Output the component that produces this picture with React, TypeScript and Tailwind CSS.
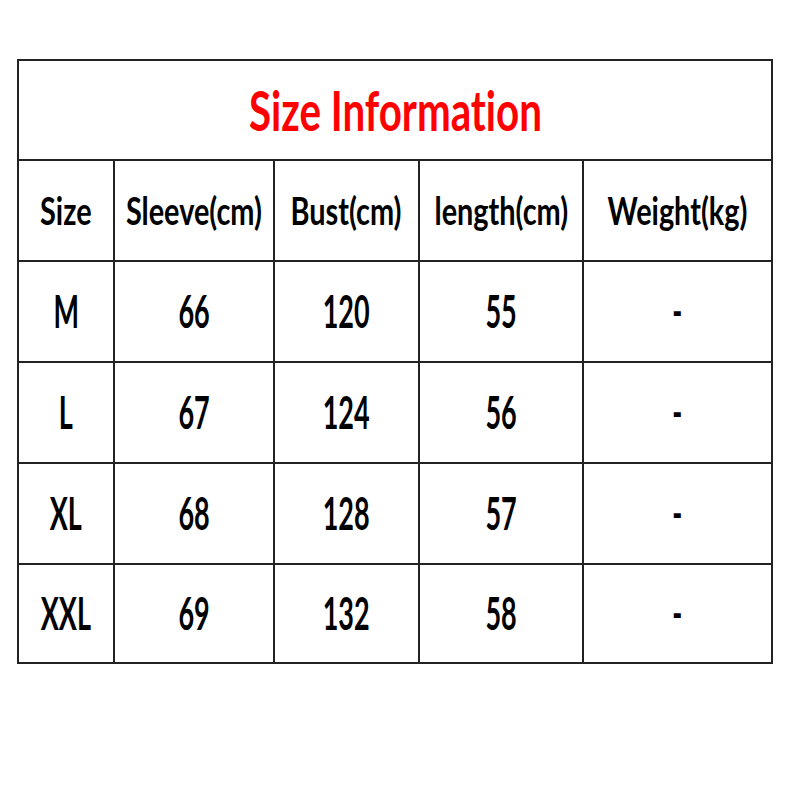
import React from 'react'

const headers = ['Size', 'Sleeve(cm)', 'Bust(cm)', 'length(cm)', 'Weight(kg)']

const rows = [
  ['M', '66', '120', '55', '-'],
  ['L', '67', '124', '56', '-'],
  ['XL', '68', '128', '57', '-'],
  ['XXL', '69', '132', '58', '-'],
]

const cols = 'grid grid-cols-[94px_160px_145px_164px_189px]'

export default function App() {
  return (
    <div className="h-[800px] w-[800px] bg-white pt-[59px] pl-[17px] font-['Lato',sans-serif] text-black [font-variant-ligatures:none]">
      <div className="w-[756px] border-2 border-[#222]">
        {/* title */}
        <div className="flex h-[98px] items-center justify-center">
          <span className="inline-block scale-x-[0.72] text-[56px] leading-none font-bold whitespace-nowrap text-[#ff0000]">
            Size Information
          </span>
        </div>

        {/* header row */}
        <div className={`${cols} h-[101px] border-t-2 border-[#222]`}>
          {headers.map((h, i) => (
            <div
              key={h}
              className={`flex items-center justify-center ${i > 0 ? 'border-l-2 border-[#222]' : ''}`}
            >
              <span className="inline-block scale-x-[0.74] text-[39px] leading-none font-bold whitespace-nowrap">
                {h}
              </span>
            </div>
          ))}
        </div>

        {/* data rows */}
        {rows.map((r, ri) => (
          <div
            key={r[0]}
            className={`${cols} ${ri === rows.length - 1 ? 'h-[99px]' : 'h-[101px]'} border-t-2 border-[#222]`}
          >
            {r.map((c, i) => (
              <div
                key={i}
                className={`flex items-center justify-center ${i > 0 ? 'border-l-2 border-[#222]' : ''}`}
              >
                <span className="inline-block scale-x-[0.6] text-[45px] leading-none font-bold whitespace-nowrap">
                  {c}
                </span>
              </div>
            ))}
          </div>
        ))}
      </div>
    </div>
  )
}
